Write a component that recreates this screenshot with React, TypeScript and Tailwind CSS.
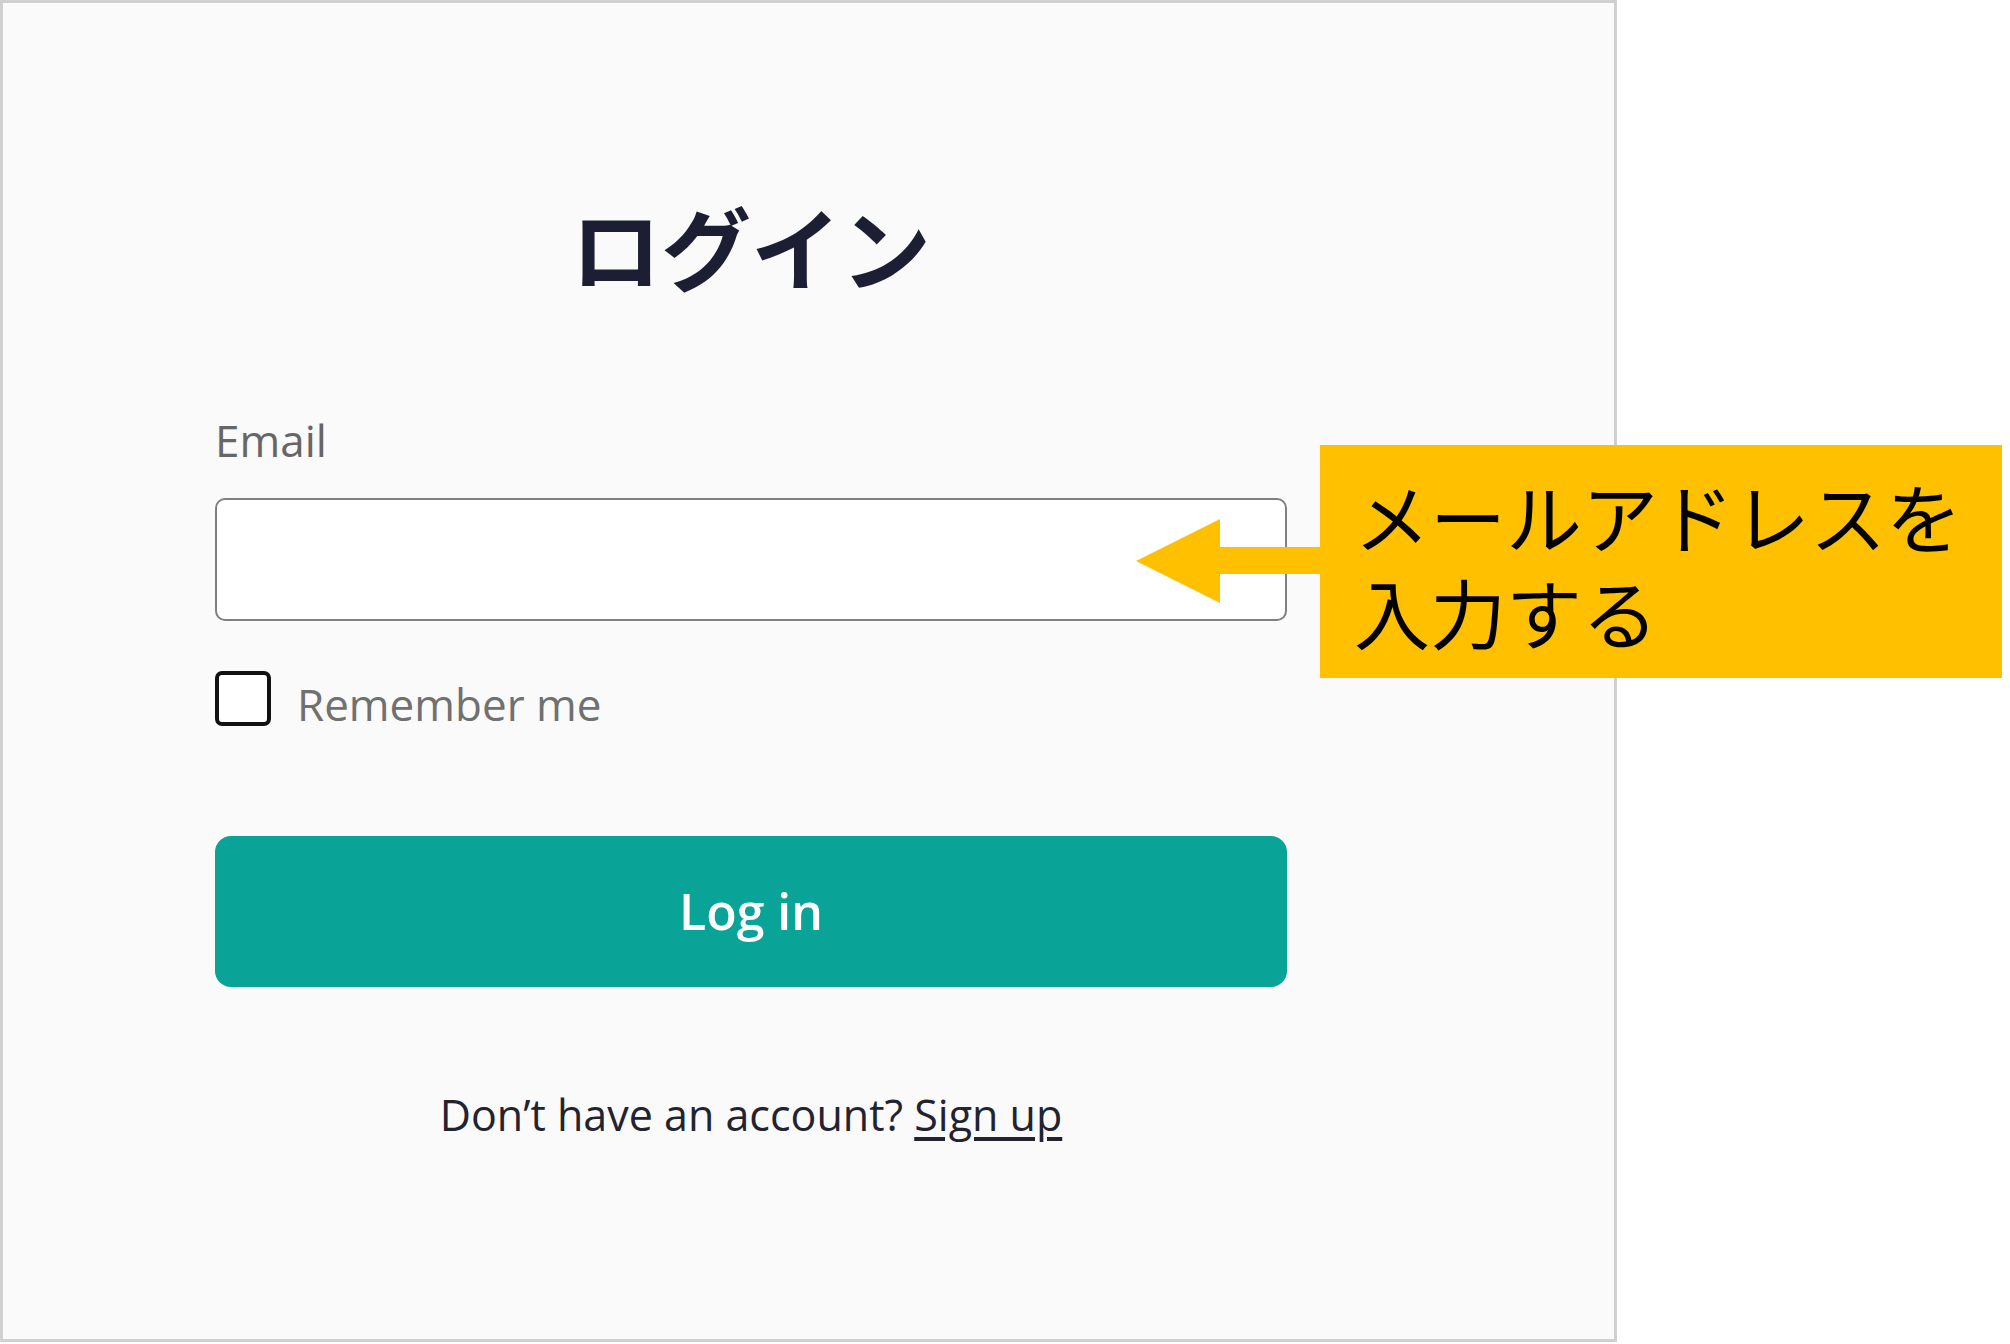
import { useState } from 'react';

export default function App() {
  const [email, setEmail] = useState('');
  const [remember, setRemember] = useState(false);

  return (
    <div className="relative w-[2010px] h-[1344px] bg-white overflow-hidden">
      <div className="w-[1617px] h-[1342px] border-[3px] border-[#d0d0d0] bg-[#fafafa]">
        <div className="ml-[212px] w-[1072px] flex flex-col font-['Open_Sans',sans-serif]">
          <h1 className="mt-[182px] text-center text-[90px] leading-[120px] font-bold text-[#1c1f33] font-['Noto_Sans_CJK_JP',sans-serif]">
            ログイン
          </h1>

          <label htmlFor="email" className="mt-[105px] text-[44px] leading-[60px] text-[#666]">
            Email
          </label>
          <input
            id="email"
            type="email"
            value={email}
            onChange={(e) => setEmail(e.target.value)}
            className="mt-[28px] h-[123px] w-full rounded-[10px] border-2 border-[#808080] bg-white px-6 text-[44px] outline-none"
          />

          <label className="mt-[50px] flex items-start gap-[26px] cursor-pointer">
            <input
              type="checkbox"
              checked={remember}
              onChange={(e) => setRemember(e.target.checked)}
              className="sr-only"
            />
            <span className="w-[56px] h-[55px] rounded-[7px] border-[4px] border-[#111] bg-white" />
            <span className="mt-[6px] text-[44px] leading-[55px] text-[#707070]">Remember me</span>
          </label>

          <button
            type="submit"
            className="mt-[104px] h-[151px] w-full rounded-[16px] bg-[#0aa398] text-white text-[50px] font-semibold"
          >
            Log in
          </button>

          <p className="mt-[98px] text-center text-[43px] leading-[60px] text-[#22232f]">
            Don’t have an account? <a href="#" className="underline underline-offset-[6px]">Sign up</a>
          </p>
        </div>
      </div>

      {/* annotation callout */}
      <svg className="absolute left-[1136px] top-[519px]" width="190" height="84" viewBox="0 0 190 84">
        <polygon points="0,42 84,0 84,28 190,28 190,55 84,55 84,84" fill="#ffc000" />
      </svg>
      <div className="absolute left-[1320px] top-[445px] w-[682px] h-[233px] bg-[#ffc000] pl-[34px] pt-[22px] text-[76px] leading-[96px] text-black font-['Noto_Sans_CJK_JP',sans-serif]">
        メールアドレスを
        <br />
        入力する
      </div>
    </div>
  );
}
